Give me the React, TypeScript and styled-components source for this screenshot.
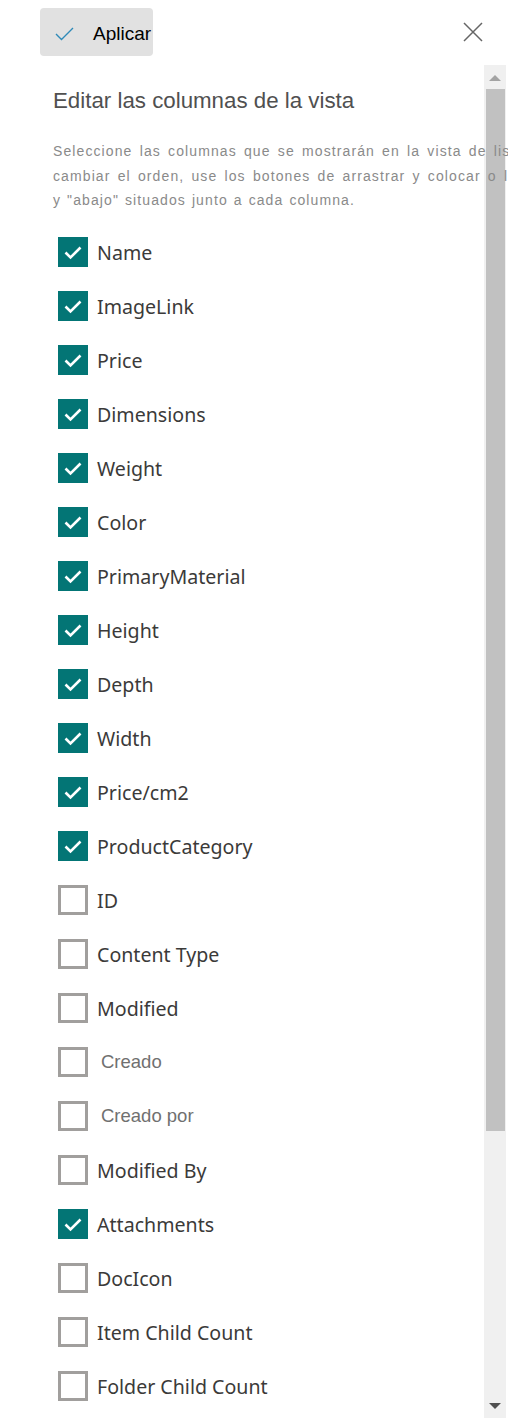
import styled, { createGlobalStyle } from "styled-components";

const GlobalStyle = createGlobalStyle`
  html, body {
    margin: 0;
    padding: 0;
    background: #fff;
  }
  body {
    font-family: "Liberation Sans", Arial, sans-serif;
  }
`;

const Panel = styled.div`
  display: flex;
  flex-direction: column;
  height: 100vh;
  overflow: hidden;
`;

const Header = styled.div`
  display: flex;
  align-items: flex-start;
  justify-content: space-between;
  height: 65px;
  flex-shrink: 0;
  padding: 8px 25px 0 40px;
  box-sizing: border-box;
`;

const ApplyButton = styled.button`
  display: flex;
  align-items: center;
  gap: 19px;
  width: 113px;
  height: 48px;
  padding: 4px 0 0 15px;
  box-sizing: border-box;
  border: none;
  border-radius: 4px;
  background: #e1e1e1;
  color: #000;
  font-family: "Liberation Sans", Arial, sans-serif;
  font-size: 19px;
  overflow: hidden;
  white-space: nowrap;
  cursor: pointer;
`;

const CloseButton = styled.button`
  width: 20px;
  height: 20px;
  margin-top: 14px;
  padding: 0;
  border: none;
  background: none;
  cursor: pointer;
`;

const Body = styled.div`
  display: flex;
  flex: 1;
  min-height: 0;
`;

const Content = styled.div`
  flex: 1;
  min-width: 0;
  padding-left: 53px;
  position: relative;
  z-index: 1;
`;

const Title = styled.h2`
  margin: 23px 0 0;
  font-family: "Liberation Sans", Arial, sans-serif;
  font-weight: normal;
  font-size: 22.3px;
  line-height: 26px;
  color: #505050;
`;

const Description = styled.div`
  margin-top: 25px;
  font-family: "Liberation Sans", Arial, sans-serif;
  font-size: 14px;
  line-height: 24.5px;
  letter-spacing: 1.1px;
  color: #8a8a8a;
`;

// the first two lines are justified in the original, so their words sit wider apart
const Line = styled.span<{ $spread?: boolean }>`
  display: block;
  white-space: nowrap;
  word-spacing: ${(p) => (p.$spread ? "2.2px" : "1px")};
`;

const List = styled.ul`
  list-style: none;
  margin: 12.5px 0 0;
  padding: 0;
`;

const Row = styled.li`
  display: flex;
  align-items: center;
  height: 54px;
  padding-left: 5px;
`;

const Box = styled.span<{ $checked: boolean }>`
  display: flex;
  align-items: center;
  justify-content: center;
  width: 30px;
  height: 30px;
  box-sizing: border-box;
  flex-shrink: 0;
  background: ${(p) => (p.$checked ? "#037575" : "#fff")};
  border: ${(p) => (p.$checked ? "none" : "3px solid #a19f9d")};
`;

const Label = styled.span<{ $legacy?: boolean }>`
  margin-left: ${(p) => (p.$legacy ? "13px" : "9px")};
  font-family: ${(p) =>
    p.$legacy
      ? `"Liberation Sans", Arial, sans-serif`
      : `"Noto Sans", "Open Sans", sans-serif`};
  font-size: ${(p) => (p.$legacy ? "18.5px" : "19.6px")};
  color: ${(p) => (p.$legacy ? "#707070" : "#3b3a39")};
  white-space: nowrap;
`;

const Scrollbar = styled.div`
  display: flex;
  flex-direction: column;
  width: 22px;
  margin-right: 2px;
  background: #f0f0f0;
  flex-shrink: 0;
`;

const ArrowButton = styled.div`
  display: flex;
  align-items: center;
  justify-content: center;
  height: 24px;
  flex-shrink: 0;
`;

const Thumb = styled.div`
  height: 1042px;
  margin: 0 1px 0 2px;
  background: #c1c1c1;
`;

const Track = styled.div`
  flex: 1;
`;

const columns: { name: string; checked: boolean; legacy?: boolean }[] = [
  { name: "Name", checked: true },
  { name: "ImageLink", checked: true },
  { name: "Price", checked: true },
  { name: "Dimensions", checked: true },
  { name: "Weight", checked: true },
  { name: "Color", checked: true },
  { name: "PrimaryMaterial", checked: true },
  { name: "Height", checked: true },
  { name: "Depth", checked: true },
  { name: "Width", checked: true },
  { name: "Price/cm2", checked: true },
  { name: "ProductCategory", checked: true },
  { name: "ID", checked: false },
  { name: "Content Type", checked: false },
  { name: "Modified", checked: false },
  { name: "Creado", checked: false, legacy: true },
  { name: "Creado por", checked: false, legacy: true },
  { name: "Modified By", checked: false },
  { name: "Attachments", checked: true },
  { name: "DocIcon", checked: false },
  { name: "Item Child Count", checked: false },
  { name: "Folder Child Count", checked: false },
];

export default function App() {
  return (
    <Panel>
      <GlobalStyle />
      <Header>
        <ApplyButton>
          <svg width="19" height="14" viewBox="0 0 19 14">
            <polyline
              points="1,7 6.5,12.5 18,1"
              fill="none"
              stroke="#2f8ab8"
              strokeWidth="1.4"
            />
          </svg>
          Aplicar
        </ApplyButton>
        <CloseButton aria-label="Cerrar">
          <svg width="20" height="20" viewBox="0 0 20 20">
            <path d="M1 1 L19 19 M19 1 L1 19" stroke="#666" strokeWidth="1.5" />
          </svg>
        </CloseButton>
      </Header>
      <Body>
        <Content>
          <Title>Editar las columnas de la vista</Title>
          <Description>
            <Line $spread>Seleccione las columnas que se mostrarán en la vista de lista. Para</Line>
            <Line $spread>cambiar el orden, use los botones de arrastrar y colocar o las flechas "arriba"</Line>
            <Line>y "abajo" situados junto a cada columna.</Line>
          </Description>
          <List>
            {columns.map((c) => (
              <Row key={c.name}>
                <Box $checked={c.checked}>
                  {c.checked && (
                    <svg width="30" height="30" viewBox="0 0 30 30">
                      <polyline
                        points="7.5,15.5 12.5,20.5 22.5,10.5"
                        fill="none"
                        stroke="#fff"
                        strokeWidth="2.6"
                      />
                    </svg>
                  )}
                </Box>
                <Label $legacy={c.legacy}>{c.name}</Label>
              </Row>
            ))}
          </List>
        </Content>
        <Scrollbar>
          <ArrowButton>
            <svg width="12" height="7" viewBox="0 0 12 7">
              <polygon points="0,7 12,7 6,1" fill="#a3a3a3" />
            </svg>
          </ArrowButton>
          <Thumb />
          <Track />
          <ArrowButton>
            <svg width="12" height="7" viewBox="0 0 12 7">
              <polygon points="0,0 12,0 6,6" fill="#505050" />
            </svg>
          </ArrowButton>
        </Scrollbar>
      </Body>
    </Panel>
  );
}
